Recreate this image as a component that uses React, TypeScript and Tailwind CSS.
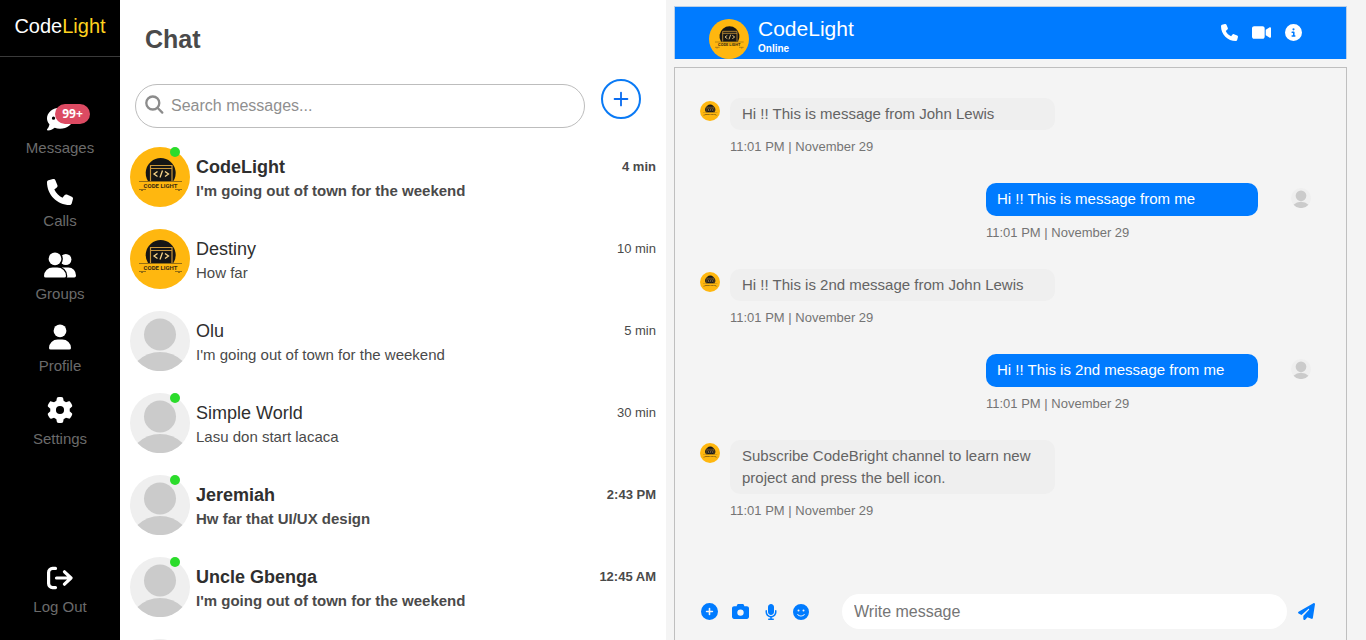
import React, { useState } from 'react';
import {
  FaCamera,
  FaCircleInfo,
  FaCirclePlus,
  FaCommentDots,
  FaFaceSmile,
  FaGear,
  FaMicrophone,
  FaPaperPlane,
  FaPhone,
  FaVideo,
} from 'react-icons/fa6';
import { Plus } from 'lucide-react';

interface Contact {
  name: string;
  text: string;
  time: string;
  logo?: boolean;
  online?: boolean;
  unread?: boolean;
}

interface Message {
  text: string;
  mine?: boolean;
}

interface IconProps {
  className?: string;
}

const contacts: Contact[] = [
  { name: 'CodeLight', text: "I'm going out of town for the weekend", time: '4 min', logo: true, online: true, unread: true },
  { name: 'Destiny', text: 'How far', time: '10 min', logo: true },
  { name: 'Olu', text: "I'm going out of town for the weekend", time: '5 min' },
  { name: 'Simple World', text: 'Lasu don start lacaca', time: '30 min', online: true },
  { name: 'Jeremiah', text: 'Hw far that UI/UX design', time: '2:43 PM', online: true, unread: true },
  { name: 'Uncle Gbenga', text: "I'm going out of town for the weekend", time: '12:45 AM', online: true, unread: true },
  { name: '', text: '', time: '' },
];

const messages: Message[] = [
  { text: 'Hi !! This is message from John Lewis' },
  { text: 'Hi !! This is message from me', mine: true },
  { text: 'Hi !! This is 2nd message from John Lewis' },
  { text: 'Hi !! This is 2nd message from me', mine: true },
  { text: 'Subscribe CodeBright channel to learn new project and press the bell icon.' },
];

const GroupIcon: React.FC<IconProps> = ({ className }) => (
  <svg viewBox="0 0 32 26" className={className} fill="currentColor" aria-hidden="true">
    <circle cx="21.800" cy="7.500" r="5.600" />
    <path d="M18 15.500h6.500a7.500 8 0 0 1 7.500 8q0 2-1.700 2H18z" />
    <circle cx="11" cy="6.800" r="7.900" fill="black" />
    <circle cx="11" cy="6.800" r="6.400" />
    <path
      d="M0 24a8.700 8.500 0 0 1 8.700-8.500h4.600A8.700 8.500 0 0 1 22 24q0 1.500-1.700 1.500H1.700Q0 25.500 0 24z"
      stroke="black"
      strokeWidth="2.600"
      paintOrder="stroke"
    />
  </svg>
);

const UserIcon: React.FC<IconProps> = ({ className }) => (
  <svg viewBox="0 0 22 26" className={className} fill="currentColor" aria-hidden="true">
    <circle cx="11" cy="6.800" r="6.400" />
    <path d="M0 24a8.700 8.500 0 0 1 8.700-8.500h4.600A8.700 8.500 0 0 1 22 24q0 1.500-1.700 1.500H1.700Q0 25.500 0 24z" />
  </svg>
);

const navItems = [
  { label: 'Messages', icon: FaCommentDots, badge: '99+' },
  { label: 'Calls', icon: FaPhone },
  { label: 'Groups', icon: GroupIcon },
  { label: 'Profile', icon: UserIcon },
  { label: 'Settings', icon: FaGear },
];

const LogoAvatar: React.FC<IconProps> = ({ className }) => (
  <svg viewBox="0 0 60 60" className={className} aria-hidden="true">
    <circle cx="30" cy="30" r="30" fill="#ffb70f" />
    <path d="M18 34A15 15 0 1 1 43.400 34z" fill="#161616" />
    <path d="M20.500 34V18.500h21.500V34M20.500 21.500h21.500" fill="none" stroke="#c9963a" strokeWidth="1.200" />
    <path d="M27.500 24.500L24 27l3.500 2.500M35 24.500l3.500 2.500-3.500 2.500M32.500 23.500l-2.500 7" fill="none" stroke="#f7d48a" strokeWidth="1.300" />
    <path d="M9 34.500h43M9 42.500h7M45 42.500h7M11 43.500h2M48 43.500h2" fill="none" stroke="#7a5c14" strokeWidth="0.800" />
    <text x="30.500" y="41" textAnchor="middle" fontFamily="Roboto, sans-serif" fontSize="6" fontWeight="bold" fill="#3a2c10">
      CODE LIGHT
    </text>
  </svg>
);

const BlankAvatar: React.FC<IconProps> = ({ className }) => (
  <svg viewBox="0 0 60 60" className={className} aria-hidden="true">
    <circle cx="30" cy="30" r="30" fill="#efefef" />
    <circle cx="30" cy="23.500" r="16" fill="#cbcbcb" />
    <path d="M7.500 50Q17 41 30 41t22.500 9A30 30 0 0 1 7.500 50z" fill="#cbcbcb" />
  </svg>
);

const LogOutIcon: React.FC<IconProps> = ({ className }) => (
  <svg viewBox="0 0 26 26" className={className} fill="none" stroke="currentColor" strokeWidth="3.200" strokeLinecap="round" strokeLinejoin="round" aria-hidden="true">
    <path d="M8.500 3.400H5.600a4 4 0 0 0-4 4v11.200a4 4 0 0 0 4 4h2.900" />
    <path d="M9.500 13h14M17.500 6.800l6.500 6.200-6.500 6.200" />
  </svg>
);

const SearchIcon: React.FC<IconProps> = ({ className }) => (
  <svg viewBox="0 0 20 20" className={className} fill="none" stroke="currentColor" strokeWidth="2.300" strokeLinecap="round" aria-hidden="true">
    <circle cx="7.800" cy="8" r="6.500" />
    <path d="M12.700 13l4.600 4.600" />
  </svg>
);

const Sidebar: React.FC = () => (
  <aside className="flex w-[120px] shrink-0 flex-col bg-black text-[15px] text-[#6b6b6b]">
    <h1 className="h-[57px] border-b border-[#3a3a3a] pt-[11px] text-center text-[20px] leading-[30px] text-white">
      Code<span className="text-[#ffd21f]">Light</span>
    </h1>
    <nav className="mt-[47px] flex h-[344px] flex-col justify-between">
      {navItems.map(({ label, icon: Icon, badge }) => (
        <a key={label} href="#" className="flex flex-col items-center gap-[7px]">
          <span className="relative flex h-[28px] items-end justify-center">
            <Icon className="h-[26px] w-auto text-white" />
            {badge && (
              <span className="absolute top-0 left-[8px] h-[20px] w-[35px] rounded-full bg-[#dc4a62] text-center font-['Noto_Sans'] text-[12px] leading-[20px] font-bold text-white">
                {badge}
              </span>
            )}
          </span>
          <span className="leading-[18px]">{label}</span>
        </a>
      ))}
    </nav>
    <a href="#" className="mt-auto mb-[24px] flex flex-col items-center gap-[7px]">
      <LogOutIcon className="size-[26px] text-white" />
      <span className="leading-[18px]">Log Out</span>
    </a>
  </aside>
);

const ContactRow: React.FC<{ contact: Contact }> = ({ contact }) => (
  <li className={`flex h-[82px] shrink-0 gap-[6px] ${contact.unread ? 'font-bold' : ''}`}>
    <div className="relative size-[60px] shrink-0">
      {contact.logo ? <LogoAvatar className="size-[60px]" /> : <BlankAvatar className="size-[60px]" />}
      {contact.online && <span className="absolute top-0 right-[10px] size-[10px] rounded-full bg-[#2bdc2b]" />}
    </div>
    <div className="min-w-0 flex-1 pt-[8px]">
      <div className="flex items-center justify-between">
        <h3 className="text-[18px] leading-[24px] text-[#2f2f2f]">{contact.name}</h3>
        <span className="text-[13px] leading-[24px] text-[#4a4a4a]">{contact.time}</span>
      </div>
      <p className="truncate text-[15px] leading-[24px] text-[#4a4a4a]">{contact.text}</p>
    </div>
  </li>
);

const ChatList: React.FC = () => {
  const [search, setSearch] = useState<string>('');

  return (
    <section className="flex min-w-0 flex-[526] flex-col px-[10px]">
      <h2 className="mt-[23px] ml-[15px] text-[25px] leading-[32px] font-bold text-[#4a4a4a]">Chat</h2>
      <div className="mt-[24px] mr-[15px] ml-[5px] flex gap-4">
        <label className="mt-[5px] flex h-[44px] flex-1 items-center gap-[6px] rounded-full border border-[#bdbdbd] px-[9px]">
          <SearchIcon className="mb-[2px] size-[20px] shrink-0 text-[#8c8c8c]" />
          <input
            type="text"
            aria-label="Search messages"
            className="w-full text-[16px] text-[#4a4a4a] outline-none placeholder:text-[#8f8f8f]"
            placeholder="Search messages..."
            value={search}
            onChange={(e) => setSearch(e.target.value)}
          />
        </label>
        <button
          type="button"
          aria-label="New chat"
          className="flex size-[40px] items-center justify-center rounded-full border-2 border-[#0a7af5] text-[#0a6cf0]"
        >
          <Plus size={22} strokeWidth={2} />
        </button>
      </div>
      <ul className="mt-[19px] flex min-h-0 flex-1 flex-col overflow-hidden">
        {contacts.map((contact, i) => (
          <ContactRow key={i} contact={contact} />
        ))}
      </ul>
    </section>
  );
};

const MessageItem: React.FC<{ message: Message }> = ({ message }) => {
  if (message.mine) {
    return (
      <div className="flex justify-end gap-[33px]">
        <div className="w-[272px]">
          <p className="rounded-[10px] bg-[#007bff] px-[11px] pt-[5px] pb-[6px] text-[15px] leading-[22px] text-white">{message.text}</p>
          <p className="mt-2 text-[13px] leading-[18px] text-[#747474]">11:01 PM | November 29</p>
        </div>
        <BlankAvatar className="mt-[5px] size-[20px]" />
      </div>
    );
  }
  return (
    <div className="flex gap-[10px]">
      <LogoAvatar className="mt-[3px] size-[20px]" />
      <div className="w-[325px]">
        <p className="rounded-[10px] bg-[#efefef] px-3 py-[5px] text-[15px] leading-[22px] text-[#646464]">{message.text}</p>
        <p className="mt-2 text-[13px] leading-[18px] text-[#747474]">11:01 PM | November 29</p>
      </div>
    </div>
  );
};

const Conversation: React.FC = () => {
  const [draft, setDraft] = useState<string>('');

  return (
    <section className="flex min-w-0 flex-[673] flex-col gap-2 bg-[#f4f4f4] pt-[6px] pr-[19px] pl-2">
      <header className="flex h-[53px] border border-b-0 border-[#b9cfe8] bg-[#007bff] pr-[44px] pl-[34px] text-white">
        <LogoAvatar className="mt-3 size-[40px]" />
        <div className="ml-[9px] flex-1 pt-[10px]">
          <h2 className="text-[21px] leading-[24px]">CodeLight</h2>
          <p className="text-[10px] leading-[16px] font-bold">Online</p>
        </div>
        <div className="flex h-[50px] items-center gap-[14px]">
          <button type="button" aria-label="Call"><FaPhone className="size-[17px]" /></button>
          <button type="button" aria-label="Video call"><FaVideo className="size-[19px]" /></button>
          <button type="button" aria-label="Info"><FaCircleInfo className="size-[17px]" /></button>
        </div>
      </header>
      <div className="flex min-h-0 flex-1 flex-col border border-b-0 border-[#bfbfbf] pl-[25px]">
        <div className="flex min-h-0 flex-1 flex-col gap-[27px] overflow-hidden pt-[30px] pr-[35px]">
          {messages.map((message) => (
            <MessageItem key={message.text} message={message} />
          ))}
        </div>
        <form className="mb-[11px] flex items-center pr-[31px] text-[#007bff]" onSubmit={(e) => e.preventDefault()}>
          <div className="flex w-[142px] items-center gap-[14px] pl-px">
            <button type="button" aria-label="Add"><FaCirclePlus className="size-[17px]" /></button>
            <button type="button" aria-label="Camera"><FaCamera className="size-[17px]" /></button>
            <button type="button" aria-label="Record"><FaMicrophone className="size-[16px]" /></button>
            <button type="button" aria-label="Emoji"><FaFaceSmile className="size-[16px]" /></button>
          </div>
          <input
            type="text"
            aria-label="Write message"
            className="h-[35px] min-w-0 flex-1 rounded-full bg-white px-3 text-[16px] text-[#4a4a4a] outline-none placeholder:text-[#757575]"
            placeholder="Write message"
            value={draft}
            onChange={(e) => setDraft(e.target.value)}
          />
          <button type="submit" aria-label="Send" className="pl-[11px]"><FaPaperPlane className="size-[17px]" /></button>
        </form>
      </div>
    </section>
  );
};

const App: React.FC = () => (
  <div className="flex h-screen overflow-hidden bg-white font-['Liberation_Sans',Arial,sans-serif]">
    <Sidebar />
    <ChatList />
    <Conversation />
  </div>
);

export default App;
